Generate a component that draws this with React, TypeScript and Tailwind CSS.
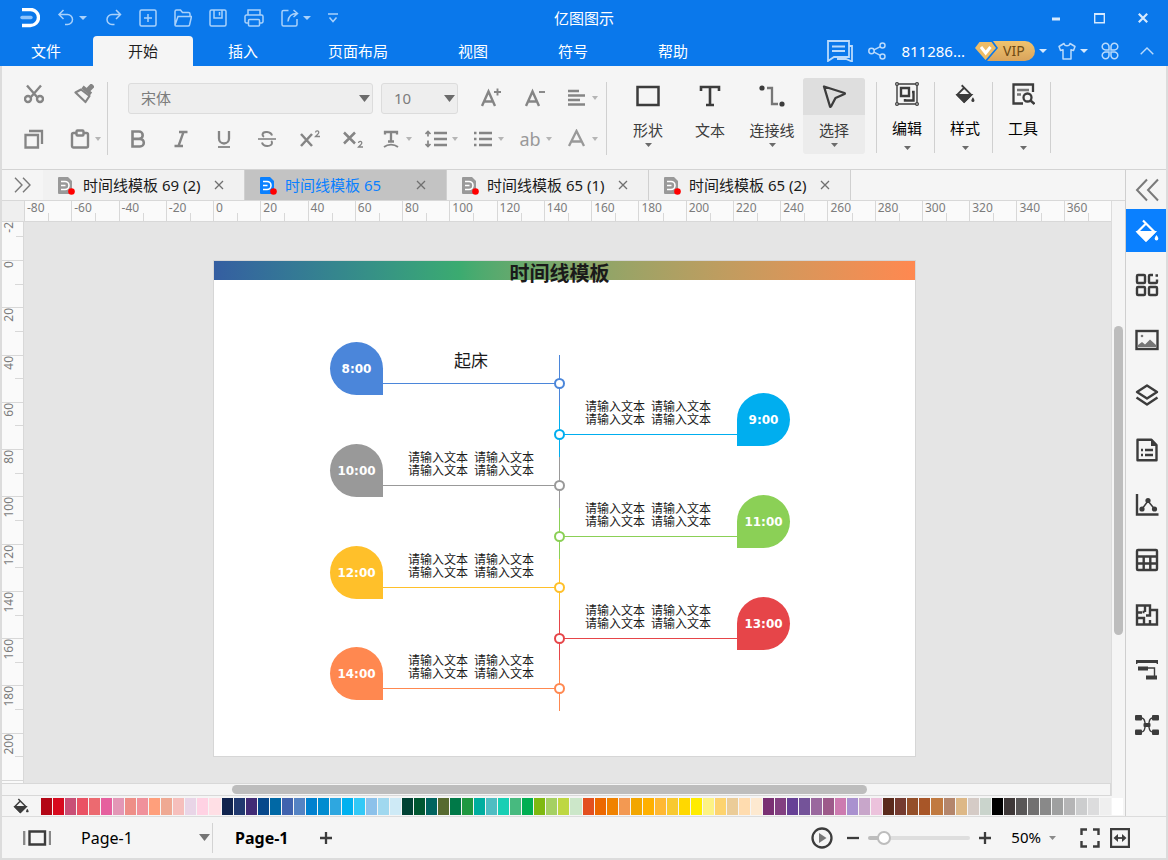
import type { ReactNode } from "react";

const swatches = [
  "#b30615", "#d80a1e", "#c94f76", "#ea5264", "#ec6a70", "#e6609e", "#e397b6", "#ee8e87", "#f0919b", "#ff9f7b",
  "#efa993", "#f6bfbc", "#e9d5e7", "#ffd2e3", "#ffdfe5", "#11234e", "#21396f", "#412b75", "#07488b", "#0068a5",
  "#4063ae", "#5483c3", "#0081cf", "#008cd0", "#2ea7e0", "#00b1f0", "#33c9f7", "#8cc1ea", "#a0d8ef", "#ceeaf6",
  "#004234", "#005731", "#00645f", "#566a30", "#007948", "#1f9840", "#00ae9f", "#4fbdc2", "#18cfb4", "#47ba7f",
  "#00ae52", "#7fb911", "#a5d063", "#bed742", "#cce7c9", "#e3501f", "#ec6800", "#f08200", "#f39952", "#f2a600",
  "#ffb000", "#ffb833", "#f8c931", "#ffd800", "#ffec00", "#fdf284", "#fdd36f", "#ebcc98", "#ffdcaf", "#fde9d0",
  "#7a3073", "#834081", "#674196", "#745399", "#9a689e", "#9d5a8a", "#cd7bb0", "#a991cf", "#c8a6ca", "#ecc2dc",
  "#5a2a1c", "#753b30", "#944f29", "#a85628", "#c17a40", "#b4866c", "#ddb887", "#d5cbc6", "#cad4cc", "#000000",
  "#3e3838", "#595757", "#727171", "#898989", "#9fa0a0", "#b5b5b6", "#cccdce", "#dcdcdd", "#efefef", "#ffffff",
];

const menus = ["插入", "页面布局", "视图", "符号", "帮助"];

const hTicks = Array.from({ length: 23 }, (_, i) => i * 20 - 80);
const vTicks = Array.from({ length: 11 }, (_, i) => i * 20);

const docs = [
  { name: "时间线模板 69 (2)", active: false },
  { name: "时间线模板 65", active: true },
  { name: "时间线模板 65 (1)", active: false },
  { name: "时间线模板 65 (2)", active: false },
];

const events = [
  { time: "8:00", color: "#4b86da", title: "起床" },
  { time: "9:00", color: "#00aeef" },
  { time: "10:00", color: "#999999" },
  { time: "11:00", color: "#8bd056" },
  { time: "12:00", color: "#ffc02a" },
  { time: "13:00", color: "#e64549" },
  { time: "14:00", color: "#ff8850" },
];

type IconProps = { children: ReactNode; className?: string; box?: string; sw?: number };

function Icon({ children, className = "size-5", box = "0 0 20 20", sw = 2.3 }: IconProps) {
  return (
    <svg
      className={`shrink-0 ${className}`}
      viewBox={box}
      fill="none"
      stroke="currentColor"
      strokeWidth={sw}
      aria-hidden="true"
    >
      {children}
    </svg>
  );
}

function Caret({ className = "w-2 h-1 text-[#6b6b6b]" }: { className?: string }) {
  return (
    <svg className={`shrink-0 ${className}`} viewBox="0 0 8 4" preserveAspectRatio="none" aria-hidden="true">
      <path d="M0 0h8L4 4z" fill="currentColor" />
    </svg>
  );
}

function Bucket({ className = "size-6" }: { className?: string }) {
  return (
    <Icon className={className} box="0 0 24 24" sw={2.2}>
      <path d="M8 1.500 19.500 13 11 21.500 2.500 13 11 4.500" strokeLinejoin="round" />
      <path d="M3 13h16.500L11 21.500z" fill="currentColor" />
      <path d="M21.500 16c1.300 2 1.800 2.800 1.800 3.700a1.800 1.800 0 0 1-3.600 0c0-.9.500-1.700 1.800-3.700z" fill="currentColor" stroke="none" />
    </Icon>
  );
}

/* ---------- title bar + menu ---------- */

function TitleBar() {
  return (
    <div className="grid h-9 grid-cols-[1fr_auto_1fr] items-center pr-5 pl-5 text-[#a9d1fb]">
      <div className="flex items-center gap-[17px]">
        <svg className="h-5 w-5" viewBox="0 0 20 20" fill="none" aria-hidden="true">
          <path d="M2 1.500h8.500a8 8 0 0 1 0 16H2" stroke="#fff" strokeWidth="3.400" />
          <path d="M2 9.500h9" stroke="#8fc3fb" strokeWidth="3.400" strokeLinecap="round" />
        </svg>
        <div className="flex items-center gap-1">
          <button aria-label="撤销">
            <Icon className="size-[18px]" box="0 0 18 18" sw={1.5}>
              <path d="M6.500 1 2 5.500 6.500 10M2 5.500h8.500a5 5 0 0 1 0 10H8" />
            </Icon>
          </button>
          <Caret className="w-2 h-1" />
        </div>
        <button aria-label="重做">
          <Icon className="size-[18px]" box="0 0 18 18" sw={1.5}>
            <path d="M12 1l4.500 4.500L12 10M16.500 5.500H8a5 5 0 0 0 0 10h2.500" />
          </Icon>
        </button>
        <button aria-label="新建">
          <Icon className="size-[18px]" box="0 0 18 18" sw={1.5}>
            <rect x="1" y="1" width="16" height="16" rx="1.500" />
            <path d="M9 5v8M5 9h8" />
          </Icon>
        </button>
        <button aria-label="打开">
          <Icon className="size-[18px]" box="0 0 18 18" sw={1.5}>
            <path d="M1 16V2.500A1.500 1.500 0 0 1 2.500 1h4l2 2.500h6A1.500 1.500 0 0 1 16 5v2M1 16 4 7.500h13.500L15.500 16c-.2.700-.7 1-1.500 1H2c-.7 0-1-.4-1-1z" />
          </Icon>
        </button>
        <button aria-label="保存">
          <Icon className="size-[18px]" box="0 0 18 18" sw={1.5}>
            <rect x="1" y="1" width="16" height="16" rx="1.500" />
            <path d="M5 1v8h8V1M10.500 3v3.500" />
          </Icon>
        </button>
        <button aria-label="打印">
          <Icon className="h-[18px] w-5" box="0 0 20 18" sw={1.5}>
            <path d="M4 6V1h12v5M4 14H2.500A1.500 1.500 0 0 1 1 12.500v-5A1.500 1.500 0 0 1 2.500 6h15A1.500 1.500 0 0 1 19 7.500v5a1.500 1.500 0 0 1-1.500 1.500H16" />
            <rect x="4.500" y="10.500" width="11" height="6.500" rx="1" />
          </Icon>
        </button>
        <div className="flex items-center gap-1">
          <button aria-label="导出">
            <Icon className="size-[18px]" box="0 0 18 18" sw={1.5}>
              <path d="M7.500 1.500H2.500A1.500 1.500 0 0 0 1 3v12.500A1.500 1.500 0 0 0 2.500 17h12a1.500 1.500 0 0 0 1.500-1.500V10" />
              <path d="M12.500 1 16.500 4.500l-4 3.500M16 4.500c-5 0-8.500 2-9 8" />
            </Icon>
          </button>
          <Caret className="w-2 h-1" />
        </div>
        <button aria-label="自定义快速访问">
          <Icon className="h-3 w-[10px]" box="0 0 10 12" sw={1.5}>
            <path d="M0 2h10M1.500 5.500 5 9.500l3.500-4" />
          </Icon>
        </button>
      </div>
      <h1 className="text-[15px] leading-5 text-white">亿图图示</h1>
      <div className="flex items-center justify-end gap-[33px] text-[#d6e9fd]">
        <button aria-label="最小化">
          <Icon className="size-[10px]" box="0 0 10 10" sw={3}>
            <path d="M1 6h8" />
          </Icon>
        </button>
        <button aria-label="最大化">
          <Icon className="size-[11px]" box="0 0 11 11" sw={1.4}>
            <path d="M.7 1h9.600v8.800H.7z" />
            <path d="M0 1h11" strokeWidth="2" />
          </Icon>
        </button>
        <button aria-label="关闭">
          <Icon className="size-[10px]" box="0 0 10 10" sw={2.2}>
            <path d="M.8.8l8.400 8.400M9.200.8.800 9.200" />
          </Icon>
        </button>
      </div>
    </div>
  );
}

function MenuBar() {
  return (
    <div className="flex h-[30px] items-stretch justify-between text-[15px] text-white">
      <nav className="flex items-stretch">
        <button className="pr-8 pl-[31px]">文件</button>
        <button className="rounded-t-sm bg-[#f5f5f5] px-[35px] text-[#1f1f1f]">开始</button>
        {menus.map((m) => (
          <button key={m} className="px-[35px]">
            {m}
          </button>
        ))}
      </nav>
      <div className="flex items-center gap-[11px] pr-[14px] text-[#b9dafc]">
        <button aria-label="消息" className="mr-1">
          <Icon className="h-[22px] w-[26px]" box="0 0 26 22" sw={1.8}>
            <path d="M1 1h21v16H7l-6 4z" />
            <path d="M5 6.500h13M5 11h13" />
            <path d="M22 6h3v15.500L19 19h-9" />
          </Icon>
        </button>
        <button aria-label="分享" className="mr-1">
          <Icon className="size-[18px]" box="0 0 18 18" sw={1.5}>
            <circle cx="3.500" cy="9" r="2.700" />
            <circle cx="14.500" cy="3.500" r="2.500" />
            <circle cx="14.500" cy="14.500" r="2.500" />
            <path d="M6 7.800 12.300 4.600M6 10.200l6.300 3.200" />
          </Icon>
        </button>
        <div className="flex items-center">
          <span className="text-white">811286...</span>
          <span className="ml-[10px] flex h-5 w-[60px] items-center rounded-r-full rounded-l-lg bg-linear-to-b from-[#f0c36e] to-[#d9a45c] text-sm text-[#6e4a14]">
            <svg className="h-5 w-6" viewBox="0 0 24 20" aria-hidden="true">
              <path d="M0 0h18l5 7-11 13H0z" fill="#0a78eb" />
              <path d="M4.500 1h12l4.500 6-10.500 12L0 7z" fill="#eebc66" />
              <path d="M6 6l4.700 6L15.500 6" fill="none" stroke="#fff" strokeWidth="3" />
            </svg>
            <span className="ml-1">VIP</span>
          </span>
          <Caret className="ml-1 h-1 w-2 text-[#d6e9fd]" />
        </div>
        <div className="flex items-center gap-1">
          <button aria-label="皮肤">
            <Icon className="size-[18px]" box="0 0 18 18" sw={1.5}>
              <path d="M6 1.500c.5 3 5.500 3 6 0L17 4.500l-1.500 4-2.500-.7V17H5V7.800l-2.500.7L1 4.500z" strokeLinejoin="round" />
            </Icon>
          </button>
          <Caret className="h-1 w-2 text-[#d6e9fd]" />
        </div>
        <button aria-label="应用" className="ml-0.5">
          <Icon className="size-[18px]" box="0 0 18 18" sw={1.5}>
            <path d="M8 8H4.700A3.400 3.400 0 1 1 8 4.700zM10 8h3.300A3.400 3.400 0 1 0 10 4.700zM8 10H4.700A3.400 3.400 0 1 0 8 13.300zM10 10h3.300a3.400 3.400 0 1 1-3.300 3.300z" />
          </Icon>
        </button>
        <button aria-label="收起功能区" className="ml-[10px]">
          <Icon className="h-2 w-[14px]" box="0 0 14 8" sw={1.4}>
            <path d="M.7 7.300 7 1l6.300 6.300" />
          </Icon>
        </button>
      </div>
    </div>
  );
}

/* ---------- ribbon ---------- */

function Tool({ label, caret, children }: { label: string; caret?: boolean; children: ReactNode }) {
  return (
    <button aria-label={label} className="flex shrink-0 items-center gap-[5px]">
      {children}
      {caret && <Caret className="h-1 w-1.5 text-[#b5b5b5]" />}
    </button>
  );
}

function BigTool({ label, caret, children }: { label: string; caret?: boolean; children: ReactNode }) {
  return (
    <button className="flex h-[76px] w-[62px] shrink-0 flex-col items-center pt-1.5 text-[#3c3c3c]">
      {children}
      <span className="mt-3 text-[15px] leading-5">{label}</span>
      {caret && <Caret className="mt-[3px] h-1 w-[7px] text-[#6b6b6b]" />}
    </button>
  );
}

function MenuTool({ label, children }: { label: string; children: ReactNode }) {
  return (
    <button className="flex h-[71px] w-[58px] shrink-0 flex-col items-center border-r border-[#d0d0d0] pl-[3px] text-[#3c3c3c]">
      {children}
      <span className="mt-3 text-[15px] leading-5 text-black">{label}</span>
      <Caret className="mt-2 h-1 w-[7px] text-[#6b6b6b]" />
    </button>
  );
}

function Ribbon() {
  return (
    <div className="flex items-start overflow-hidden border-b border-[#d3d3d3] pt-3 pb-[14px] text-[#858585]">
      <div className="mt-1 flex h-[73px] w-[106px] shrink-0 flex-col gap-[9px] border-r border-[#d0d0d0] pl-[22px]">
        <div className="flex h-8 items-start gap-[30px] pt-0.5">
          <Tool label="剪切">
            <Icon sw={2.4}>
              <path d="M3 1.500 13.500 13.500M17 1.500 6.500 13.500" />
              <circle cx="4" cy="15" r="3" />
              <circle cx="16" cy="15" r="3" />
            </Icon>
          </Tool>
          <Tool label="格式刷">
            <Icon sw={2.2}>
              <path d="M19 1 14 6" strokeWidth="5" />
              <path d="M7 5.500 15.500 12 11.500 18 1.500 8.500z" strokeLinejoin="round" />
              <path d="M8.500 3 17 10" strokeWidth="3.600" />
            </Icon>
          </Tool>
        </div>
        <div className="flex h-8 items-center gap-[26px]">
          <Tool label="复制">
            <Icon>
              <path d="M1.500 6h12.500v12.500H1.500z" />
              <path d="M5 2h13v13" />
            </Icon>
          </Tool>
          <Tool label="粘贴" caret>
            <Icon sw={2.4}>
              <rect x="2" y="4" width="16" height="14.500" rx="1.500" />
              <rect x="6.500" y="1.500" width="7" height="5" rx="1" fill="#f5f5f5" />
            </Icon>
          </Tool>
        </div>
      </div>

      <div className="mt-1 flex h-[73px] w-[499px] shrink-0 flex-col gap-[9px] border-r border-[#d0d0d0] pl-5">
        <div className="flex h-8 items-center">
          <label className="relative flex items-center">
            <select
              aria-label="字体"
              className="h-[31px] w-[245px] appearance-none rounded-[3px] border border-[#dcdcdc] bg-[#eeeeee] pl-3 text-[15px] text-[#7c7c7c]"
            >
              <option>宋体</option>
            </select>
            <Caret className="pointer-events-none absolute right-[3px] h-[7px] w-[11px] text-[#6b6b6b]" />
          </label>
          <label className="relative ml-2 flex items-center">
            <select
              aria-label="字号"
              className="h-[31px] w-[77px] appearance-none rounded-[3px] border border-[#dcdcdc] bg-[#eeeeee] pl-3 text-[15px] text-[#7c7c7c]"
            >
              <option>10</option>
            </select>
            <Caret className="pointer-events-none absolute right-[3px] h-[7px] w-[11px] text-[#6b6b6b]" />
          </label>
          <div className="ml-[23px] flex items-center gap-[22px]">
            <Tool label="增大字号">
              <Icon sw={2.4}>
                <path d="M1 18 7.500 3.500 14 18M3.500 13.500h8" />
                <path d="M16.500.5v7M13 4h7" strokeWidth="1.900" />
              </Icon>
            </Tool>
            <Tool label="减小字号">
              <Icon className="ml-0.5 size-5" sw={2.4}>
                <path d="M1 18 7.500 3.500 14 18M3.500 13.500h8" />
                <path d="M14 4h6" strokeWidth="1.900" />
              </Icon>
            </Tool>
            <Tool label="对齐" caret>
              <Icon>
                <path d="M1 3h11M1 7.500h17M1 12h12M1 16.500h17" />
              </Icon>
            </Tool>
          </div>
        </div>
        <div className="flex h-8 items-center">
          <div className="flex items-center gap-[23px]">
            <Tool label="加粗">
              <Icon sw={2.6}>
                <path d="M4.500 2.500h6.500a3.700 3.700 0 0 1 0 7.400H4.500zM4.500 9.900h7.500a3.800 3.800 0 0 1 0 7.600H4.500z" />
              </Icon>
            </Tool>
            <Tool label="斜体">
              <Icon>
                <path d="M8 3h8.500M3.500 17H12M12.500 3 7.500 17" />
              </Icon>
            </Tool>
            <Tool label="下划线">
              <Icon>
                <path d="M5 2v7.500a5 5 0 0 0 10 0V2" />
                <path d="M4 18h12" strokeWidth="1.800" />
              </Icon>
            </Tool>
            <Tool label="删除线">
              <Icon sw={2}>
                <path d="M15 6.500C14 2.500 6 1.500 5.500 5.500c0 1.500 1 2 1.500 2.300M5 13.500c1 4.500 9.500 4.500 10 .5 0-1-.3-1.500-.8-2" />
                <path d="M1 10h18" strokeWidth="1.600" />
              </Icon>
            </Tool>
            <Tool label="上标">
              <Icon sw={2.5}>
                <path d="M1 5l11 12M12 5 1 17" />
                <path d="M15.500 3.500c.3-2.300 3.700-2 3.200.3-.3 1.200-2 2.200-3.200 3.700H20" strokeWidth="1.300" />
              </Icon>
            </Tool>
            <Tool label="下标">
              <Icon sw={2.5}>
                <path d="M1 3.500l11 11M12 3.500l-11 11" />
                <path d="M15.500 14c.3-2.300 3.700-2 3.200.3-.3 1.200-2 2.200-3.200 3.700H20" strokeWidth="1.300" />
              </Icon>
            </Tool>
          </div>
          <div className="ml-[18px] flex items-center gap-[15px]">
            <Tool label="文字方向" caret>
              <Icon>
                <path d="M4 5.500V3h12v2.500M10 3v9.500M7 12.500h6" />
                <path d="M3 18c4-3.200 10-3.200 14 0" strokeWidth="1.800" />
              </Icon>
            </Tool>
            <Tool label="行距" caret>
              <Icon className="-ml-0.5 h-5 w-[22px]" box="0 0 22 20">
                <path d="M9 4h13M9 10h13M9 16h13" />
                <path d="M3 2.500v5M.5 5 3 2.500 5.500 5M3 17.500v-6M.5 15 3 17.500 5.500 15" strokeWidth="1.700" />
              </Icon>
            </Tool>
            <Tool label="项目符号" caret>
              <Icon>
                <path d="M6 4h13M6 10h13M6 16h13M1 4h2.500M1 10h2.500M1 16h2.500" />
              </Icon>
            </Tool>
            <Tool label="大小写" caret>
              <span className="w-[22px] text-lg leading-5 text-[#999999]">ab</span>
            </Tool>
            <Tool label="字体颜色" caret>
              <Icon className="size-5 text-[#999999]">
                <path d="M2 17 9.500 2 17 17M5 12.500h9" />
              </Icon>
            </Tool>
          </div>
        </div>
      </div>

      <div className="ml-[10px] flex">
        <BigTool label="形状" caret>
          <Icon className="size-6" box="0 0 24 24" sw={2.5}>
            <path d="M1.500 3h21v18h-21z" />
          </Icon>
        </BigTool>
        <BigTool label="文本">
          <Icon className="size-6" box="0 0 24 24" sw={2.6}>
            <path d="M3 7V3h18v4M12 3v18M8 21h8" />
          </Icon>
        </BigTool>
        <BigTool label="连接线" caret>
          <Icon className="h-6 w-[26px]" box="0 0 26 24">
            <path d="M8 4h5v16h6" stroke="#777" />
            <circle cx="3" cy="4" r="2.600" fill="currentColor" stroke="none" />
            <circle cx="23" cy="20" r="2.600" fill="currentColor" stroke="none" />
          </Icon>
        </BigTool>
        <button className="flex h-[76px] w-[62px] shrink-0 flex-col items-center overflow-hidden rounded-[3px] bg-[#ececec] text-[#3c3c3c]">
          <span className="flex h-[37px] w-full justify-center bg-[#dedede] pt-1.5">
            <Icon className="size-6" box="0 0 24 24" sw={2.3}>
              <path d="M2 2.500 22.500 9c.5.200.5.700 0 1l-9 4-4.500 8.500c-.3.500-.8.500-1 0z" strokeLinejoin="round" />
            </Icon>
          </span>
          <span className="mt-[5px] text-[15px] leading-5">选择</span>
          <Caret className="mt-[3px] h-1 w-[7px] text-[#6b6b6b]" />
        </button>
      </div>

      <div className="mt-1 ml-[11px] flex border-l border-[#d0d0d0]">
        <MenuTool label="编辑">
          <Icon className="size-6" box="0 0 24 24" sw={1.4}>
            <path d="M2 2h20v20H2z" />
            <path d="M6 6h8v8H6zM17 10h1.500v8.500H10V17" strokeWidth="2.400" />
            <g fill="#f5f5f5" strokeWidth="1.200">
              <circle cx="2" cy="2" r="1.400" />
              <circle cx="22" cy="2" r="1.400" />
              <circle cx="2" cy="22" r="1.400" />
              <circle cx="22" cy="22" r="1.400" />
            </g>
          </Icon>
        </MenuTool>
        <MenuTool label="样式">
          <span className="flex h-6 items-center">
            <Bucket className="size-5" />
          </span>
        </MenuTool>
        <MenuTool label="工具">
          <Icon className="size-6" box="0 0 24 24">
            <path d="M22 10V2.500H2.500v19H12" />
            <path d="M6 8h12M6 12.500h4" stroke="#777" />
            <circle cx="16.500" cy="15.500" r="4" />
            <path d="M19.500 18.500l4 3.500" strokeWidth="2.400" />
          </Icon>
        </MenuTool>
      </div>
    </div>
  );
}

/* ---------- document tabs, rulers, canvas ---------- */

function DocTabs() {
  return (
    <div className="flex h-[31px] border-b border-[#d8d8d8] bg-[#f5f5f5] text-[15px]">
      <button aria-label="更多文档" className="flex w-[41px] shrink-0 items-center pl-3 text-[#7a7a7a]">
        <Icon className="h-4 w-[17px]" box="0 0 17 16" sw={1.4}>
          <path d="M1 .7 8 8l-7 7.300M9 .7 16 8l-7 7.300" />
        </Icon>
      </button>
      {docs.map((d) => (
        <div
          key={d.name}
          className={`flex w-[202px] shrink-0 items-center border-r border-[#d0d0d0] pr-5 pl-[14px] ${
            d.active ? "bg-[#c3c3c3] text-[#0a80ff]" : "bg-[#f1f1f1] text-[#1a1a1a]"
          }`}
        >
          <svg className="h-[19px] w-[18px] shrink-0" viewBox="0 0 18 19" aria-hidden="true">
            <path d="M2 1h9l4 4v13H2a1 1 0 0 1-1-1V2a1 1 0 0 1 1-1z" fill={d.active ? "#0a80ff" : "#999"} />
            <path d="M4 5.500h4a3.500 3.500 0 0 1 0 8H4M4 9.500h4.500" fill="none" stroke="#fff" strokeWidth="1.600" />
            <circle cx="14.500" cy="15.500" r="3.300" fill="#f00" />
          </svg>
          <button className="ml-2 whitespace-nowrap">{d.name}</button>
          <button aria-label="关闭标签" className="ml-auto text-[#707070]">
            <Icon className="size-[10px]" box="0 0 10 10" sw={1.3}>
              <path d="M1 1l8 8M9 1 1 9" />
            </Icon>
          </button>
        </div>
      ))}
    </div>
  );
}

function HRuler() {
  return (
    <div className="flex h-[21px] border-b border-[#d8d8d8] bg-[#fafafa]">
      <div className="w-[22px] shrink-0 bg-[#efefef]" />
      <div className="grid min-w-0 flex-1 grid-cols-[repeat(23,minmax(0,1fr))] text-xs leading-[14px] text-[#7c7c7c]">
        {hTicks.map((t) => (
          <div key={t} className="flex items-end border-l border-[#d8d8d8]">
            <span className="h-full w-1/2 pl-0.5 whitespace-nowrap">{t}</span>
            <span className="h-2 border-l border-[#d8d8d8]" />
          </div>
        ))}
      </div>
    </div>
  );
}

function VRuler() {
  return (
    <div className="flex w-[22px] shrink-0 flex-col border-r border-[#d8d8d8] bg-[#fafafa] text-xs leading-[14px] text-[#7c7c7c]">
      <div className="flex h-[38px] shrink-0">
        <span className="w-4 rotate-180 self-start [writing-mode:vertical-rl]">-2</span>
        <span className="mt-[14px] ml-auto h-px w-2 bg-[#d8d8d8]" />
      </div>
      <div className="grid min-h-[520px] flex-1 grid-rows-[repeat(11,minmax(0,1fr))]">
        {vTicks.map((t) => (
          <div key={t} className="flex justify-between border-t border-[#d8d8d8]">
            <span className="w-4 rotate-180 self-start [writing-mode:vertical-rl]">{t}</span>
            <span className="-ml-4 h-px w-2 shrink-0 self-center bg-[#d8d8d8]" />
          </div>
        ))}
      </div>
      <div className="h-[3px] border-t border-[#d8d8d8]" />
    </div>
  );
}

// Each event owns a 51px band of the centre line; its node sits 29px into the band.
function Timeline() {
  return (
    <div className="relative mt-[38px] ml-[189px] h-[497px] w-[703px] shrink-0 border border-[#d6d6d6] bg-white">
      <div className="h-[19px] bg-linear-to-r from-[#355ea1] via-[#3bab70] via-35% to-[#ff8850]" />
      <h2 className="absolute inset-x-0 top-0 pr-[10px] text-center font-[Noto_Sans_CJK_SC] text-xl leading-6 font-bold text-[#1a1a1a]">
        时间线模板
      </h2>
      {events.map((e, i) => {
        const left = i % 2 === 0;
        return (
          <div key={e.time} className="absolute inset-x-0 h-[51px]" style={{ top: 94 + i * 51 - Math.round(i / 12) }}>
            <div className="absolute left-[345px] h-[51px] w-px" style={{ background: e.color }} />
            <div
              className={`absolute top-7 h-px ${left ? "left-[169px] w-[172px]" : "left-[350px] w-[173px]"}`}
              style={{ background: e.color }}
            />
            <div
              className="absolute top-[23px] left-[340px] size-[11px] rounded-full border-2 bg-white"
              style={{ borderColor: e.color }}
            />
            <div
              className={`absolute -top-[13px] flex size-[53px] items-center justify-center rounded-full font-[DejaVu_Sans] text-xs font-bold text-white ${
                left ? "left-[116px] rounded-br-none" : "left-[523px] rounded-bl-none"
              }`}
              style={{ background: e.color }}
            >
              {e.time}
            </div>
            <div
              className={`absolute -top-[5px] w-[176px] text-center font-['Liberation_Sans','Noto_Sans_CJK_SC',sans-serif] whitespace-nowrap text-[#1a1a1a] ${
                left ? "left-[169px]" : "left-[346px]"
              } ${e.title ? "text-[17px] leading-6" : "text-xs leading-[13px]"}`}
            >
              {e.title ?? (
                <>
                  <p className="flex justify-center gap-1.5">
                    <span>请输入文本</span>
                    <span>请输入文本</span>
                  </p>
                  <p className="flex justify-center gap-1.5">
                    <span>请输入文本</span>
                    <span>请输入文本</span>
                  </p>
                </>
              )}
            </div>
          </div>
        );
      })}
    </div>
  );
}

function Workspace() {
  return (
    <div className="flex min-h-0 flex-1">
      <div className="flex min-w-0 flex-1 flex-col">
        <HRuler />
        <div className="flex flex-1 bg-[#e5e5e5]">
          <VRuler />
          <div className="min-w-0 flex-1 overflow-hidden">
            <Timeline />
          </div>
        </div>
        <div className="h-[13px] border-y border-r border-[#d8d8d8] pt-px pr-[243px] pl-[230px]">
          <div className="h-[9px] rounded-full bg-[#bdbdbd]" />
        </div>
      </div>
      <div className="flex w-[14px] shrink-0 flex-col border-l border-[#dcdcdc] px-[2px] pt-[125px]">
        <div className="h-[309px] rounded-full bg-[#bdbdbd]" />
      </div>
    </div>
  );
}

function Palette() {
  return (
    <div className="flex h-5 items-center pr-0.5 pl-[11px] text-[#3c3c3c]">
      <Bucket className="size-4" />
      <div className="ml-3 grid h-[17px] flex-1 grid-cols-[repeat(90,minmax(0,1fr))] gap-px">
        {swatches.map((c, i) => (
          <button key={i} aria-label={c} style={{ background: c }} />
        ))}
      </div>
    </div>
  );
}

/* ---------- side panel ---------- */

function SideItem({ label, children }: { label: string; children: ReactNode }) {
  return (
    <button aria-label={label} className="flex h-[55px] items-center justify-center pl-0.5 text-[#3c3c3c]">
      <Icon className="size-6" box="0 0 24 24" sw={2.4}>
        {children}
      </Icon>
    </button>
  );
}

function SidePanel() {
  return (
    <aside className="flex w-[41px] shrink-0 flex-col border-l border-[#cfcfcf] bg-[#f5f5f5]">
      <button aria-label="展开面板" className="flex h-[39px] items-center justify-center pl-0.5 text-[#7a7a7a]">
        <Icon className="h-6 w-6" box="0 0 24 24" sw={2}>
          <path d="M12 1.500 2 12l10 10.500M23 1.500 13 12l10 10.500" />
        </Icon>
      </button>
      <button aria-label="样式" className="mb-[5px] flex h-[43px] items-center justify-center bg-[#0a80ff] pl-0.5 text-white">
        <Bucket />
      </button>
      <SideItem label="符号库">
        <rect x="2" y="2" width="8" height="8" rx="1" />
        <rect x="2" y="14" width="8" height="8" rx="1" />
        <rect x="14" y="14" width="8" height="8" rx="1" />
        <path d="M18 2h-3a1 1 0 0 0-1 1v6a1 1 0 0 0 1 1h6a1 1 0 0 0 1-1V6.500M20.500 2.500h2.500" />
      </SideItem>
      <SideItem label="图片">
        <rect x="1.500" y="3" width="21" height="18" />
        <circle cx="7" cy="8" r="1.300" fill="#777" stroke="none" />
        <path d="M3 19v-2l4-3 3 2.500 5-5 6 5.500v2z" fill="#777" stroke="none" />
      </SideItem>
      <SideItem label="图层">
        <path d="M12 2.500 22 9l-10 6.500L2 9zM1.500 14.500 12 21.500l10.500-7" strokeLinejoin="round" />
      </SideItem>
      <SideItem label="文档">
        <path d="M2.500 1.800h14L21.500 7v15.200h-19z" strokeLinejoin="round" />
        <path d="M16 1.500 22 8h-6z" fill="currentColor" stroke="none" />
        <path d="M6 12h2M10 12h8M6 17h2M10 17h8" />
      </SideItem>
      <SideItem label="图表">
        <path d="M2 1v20.500h21.500" />
        <path d="M7 16l6-8 6.500 8" strokeWidth="1.500" />
        <g fill="currentColor" stroke="none">
          <circle cx="7" cy="16" r="2.600" />
          <circle cx="13" cy="7.500" r="2.600" />
          <circle cx="19.500" cy="16" r="2.600" />
        </g>
      </SideItem>
      <SideItem label="表格">
        <rect x="2" y="2" width="20" height="20" rx="1" />
        <path d="M2 8.500h20M2 15.500h20M8.700 9v13M15.300 9v13" />
      </SideItem>
      <SideItem label="平面图">
        <path d="M2 2.500h13v4.500h7v14.500H2zM10 3v6M2 9.500h5M9.500 9h-2M2 15h7v6.500M15 7v5.500h-4M15 17v4.500" />
      </SideItem>
      <SideItem label="甘特图">
        <path d="M1 3.500h22" strokeWidth="3" />
        <path d="M1.700 3v3M22.300 3v3" strokeWidth="1.400" />
        <path d="M3 10.500h10M11 19.500h11" strokeWidth="4" />
        <path d="M13 10h6.500v8" strokeWidth="1.400" />
      </SideItem>
      <SideItem label="思维导图">
        <path d="M6 5c6 0 2 7 6 7s0-7 6-7M6 19c6 0 2-7 6-7s0 7 6 7" strokeWidth="1.400" />
        <g fill="currentColor" stroke="none">
          <rect x="0" y="2" width="7" height="5.500" rx="1" />
          <rect x="17" y="2" width="7" height="5.500" rx="1" />
          <rect x="0" y="16.500" width="7" height="5.500" rx="1" />
          <rect x="17" y="16.500" width="7" height="5.500" rx="1" />
          <rect x="8.500" y="10" width="7" height="4" rx="1" />
        </g>
      </SideItem>
    </aside>
  );
}

/* ---------- status bar ---------- */

function StatusBar() {
  return (
    <footer className="flex h-[42px] items-center border-t border-[#dcdcdc] bg-[#f5f5f5] text-base text-black">
      <button aria-label="页面视图" className="pl-[21px] text-[#3c3c3c]">
        <Icon className="h-4 w-7" box="0 0 28 16">
          <path d="M6.500 1.500h15.500v13H6.500z" strokeWidth="2.400" />
          <path d="M1.200 1v14M27 1v14" stroke="#888" />
        </Icon>
      </button>
      <label className="relative ml-[18px] flex items-center border-r border-[#d3d3d3]">
        <select aria-label="页面" className="h-[30px] w-[143px] appearance-none bg-transparent pl-3 text-base">
          <option>Page-1</option>
        </select>
        <Caret className="pointer-events-none absolute right-0.5 h-[7px] w-[11px] text-[#757575]" />
      </label>
      <button className="ml-[22px] font-bold">Page-1</button>
      <button aria-label="新建页面" className="ml-8 text-[#3c3c3c]">
        <Icon className="size-3" box="0 0 12 12">
          <path d="M6 0v12M0 6h12" />
        </Icon>
      </button>
      <div className="ml-auto flex items-center pr-9 text-[15px] text-[#3c3c3c]">
        <button aria-label="播放">
          <Icon className="size-[22px]" box="0 0 22 22" sw={2.3}>
            <circle cx="11" cy="11" r="9.500" />
            <path d="M8 6l7.500 5L8 16z" fill="#777" stroke="none" />
          </Icon>
        </button>
        <button aria-label="缩小" className="ml-[14px]">
          <Icon className="size-3" box="0 0 12 12">
            <path d="M0 6h12" />
          </Icon>
        </button>
        <input
          type="range"
          aria-label="缩放比例"
          min={0}
          max={100}
          defaultValue={10}
          className="mx-[9px] h-1 w-[102px] appearance-none rounded-full bg-[linear-gradient(to_right,#bdbdbd_14%,#dedede_14%)] [&::-webkit-slider-thumb]:size-[14px] [&::-webkit-slider-thumb]:appearance-none [&::-webkit-slider-thumb]:rounded-full [&::-webkit-slider-thumb]:border-2 [&::-webkit-slider-thumb]:border-[#bdbdbd] [&::-webkit-slider-thumb]:bg-white"
        />
        <button aria-label="放大">
          <Icon className="size-3" box="0 0 12 12">
            <path d="M6 0v12M0 6h12" />
          </Icon>
        </button>
        <button className="ml-5 flex items-center gap-2 text-black">
          50%
          <Caret className="h-1 w-[7px] text-[#8a8a8a]" />
        </button>
        <button aria-label="全屏" className="ml-6">
          <Icon sw={2.4}>
            <path d="M1.500 7V1.500H7M13 1.500h5.500V7M18.500 13v5.500H13M7 18.500H1.500V13" />
          </Icon>
        </button>
        <button aria-label="适应宽度" className="ml-[10px]">
          <Icon>
            <path d="M1 1h18v18H1z" />
            <path d="M5 10h10" strokeWidth="1.800" />
            <path d="M8 6v8l-4.500-4zM12 6v8l4.500-4z" fill="currentColor" stroke="none" />
          </Icon>
        </button>
      </div>
    </footer>
  );
}

export default function App() {
  return (
    <div className="flex min-h-screen flex-col bg-[#f5f5f5] font-['Noto_Sans','Noto_Sans_CJK_SC',sans-serif]">
      <header className="bg-[#0a78eb]">
        <TitleBar />
        <MenuBar />
      </header>
      <div className="flex flex-1 flex-col border-x-2 border-b-2 border-[#dcdcdc]">
        <Ribbon />
        <div className="flex flex-1">
          <main className="flex min-w-0 flex-1 flex-col">
            <DocTabs />
            <Workspace />
            <Palette />
          </main>
          <SidePanel />
        </div>
        <StatusBar />
      </div>
    </div>
  );
}
